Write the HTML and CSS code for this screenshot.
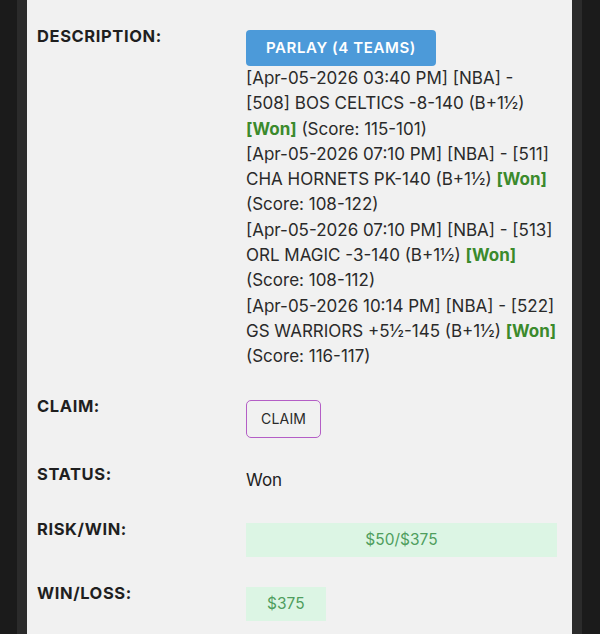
FILE: index.html
```html
<!DOCTYPE html>
<html>
<head>
<meta charset="utf-8">
<link rel="stylesheet" href="styles.css">
</head>
<body>
<div class="screen">
  <div class="frame">
    <div class="panel">
      <div class="row">
        <div class="label">DESCRIPTION:</div>
        <div class="value">
          <div class="parlay">PARLAY (4 TEAMS)</div>
          <div class="legs">
            <div class="leg">[Apr-05-2026 03:40 PM] [NBA] -<br>[508] BOS CELTICS -8-140 (B+1½)<br><span class="won">[Won]</span> (Score: 115-101)</div>
            <div class="leg">[Apr-05-2026 07:10 PM] [NBA] - [511]<br>CHA HORNETS PK-140 (B+1½) <span class="won">[Won]</span><br>(Score: 108-122)</div>
            <div class="leg">[Apr-05-2026 07:10 PM] [NBA] - [513]<br>ORL MAGIC -3-140 (B+1½) <span class="won">[Won]</span><br>(Score: 108-112)</div>
            <div class="leg">[Apr-05-2026 10:14 PM] [NBA] - [522]<br>GS WARRIORS +5½-145 (B+1½) <span class="won">[Won]</span><br>(Score: 116-117)</div>
          </div>
        </div>
      </div>
      <div class="row">
        <div class="label">CLAIM:</div>
        <div class="value"><button class="claim">CLAIM</button></div>
      </div>
      <div class="row">
        <div class="label">STATUS:</div>
        <div class="value text">Won</div>
      </div>
      <div class="row">
        <div class="label">RISK/WIN:</div>
        <div class="value"><div class="money full">$50/$375</div></div>
      </div>
      <div class="row">
        <div class="label">WIN/LOSS:</div>
        <div class="value"><div class="money">$375</div></div>
      </div>
    </div>
  </div>
</div>
</body>
</html>
```

FILE: styles.css
```css
html, body {
  margin: 0;
  padding: 0;
  background: #1b1b1b;
}
body {
  font-family: Inter, "Liberation Sans", sans-serif;
  color: #222;
}
.screen {
  height: 634px;
  padding: 0 18px 0 17px;
  box-sizing: border-box;
  overflow: hidden;
}
.frame {
  height: 100%;
  border-left: 10px solid #2b2b2b;
  border-right: 10px solid #2b2b2b;
}
.panel {
  height: 100%;
  background: #f1f1f1;
  padding: 15px 16px 0 10px;
  box-sizing: border-box;
}
.row {
  display: grid;
  grid-template-columns: 209px 310px;
  padding: 15px 0;
}
.label {
  font-size: 16.5px;
  font-weight: 700;
  line-height: 16px;
  margin-top: -2px;
  letter-spacing: 0.6px;
  color: #1f1f1f;
}
.value {
  font-size: 17px;
  line-height: 25.3px;
}
.parlay {
  display: inline-block;
  background: #4c9ad9;
  color: #fff;
  font-size: 15px;
  font-weight: 600;
  letter-spacing: 0.6px;
  line-height: 36px;
  padding: 0 20px;
  border-radius: 4px;
}
.leg {
  white-space: nowrap;
  color: #2a2a2a;
}
.won {
  color: #3b8a2c;
  font-weight: 700;
}
.claim {
  font-family: inherit;
  font-size: 14px;
  line-height: 16px;
  color: #2a2a2a;
  background: transparent;
  border: 1.5px solid #b45ec6;
  border-radius: 5px;
  padding: 10px 14px;
  letter-spacing: 0.2px;
  display: block;
}
.text {
  color: #222;
}
.money {
  display: block;
  width: max-content;
  background: #dcf5e4;
  color: #4f9e5e;
  font-size: 15.5px;
  line-height: 34px;
  padding: 0 21px;
  text-align: center;
}
.money.full {
  width: 311px;
  box-sizing: border-box;
}
```
